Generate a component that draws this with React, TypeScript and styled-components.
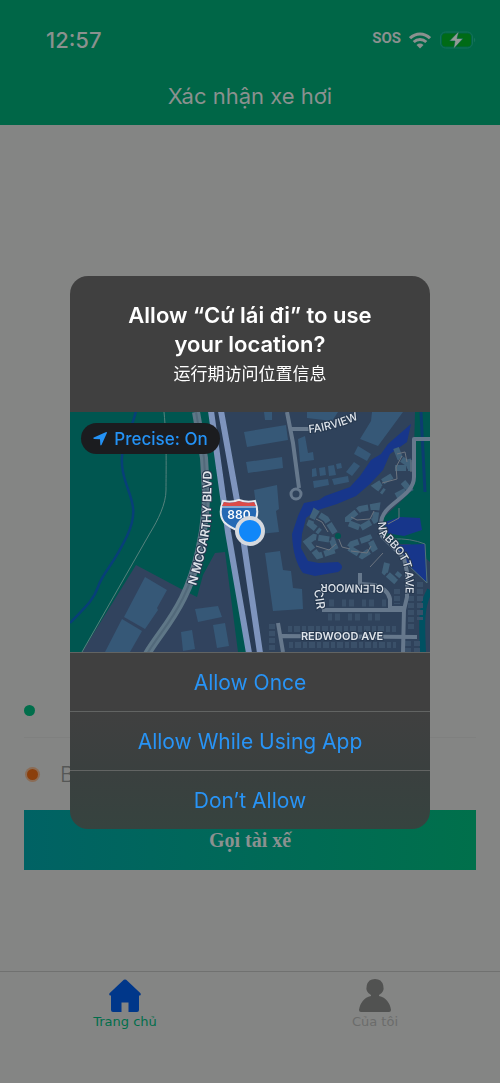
import React from "react";
import styled, { createGlobalStyle } from "styled-components";

const sans = `Inter, "Noto Sans", "Liberation Sans", sans-serif`;

const GlobalStyle = createGlobalStyle`
  * { box-sizing: border-box; }
  body { margin: 0; background: #848584; font-family: ${sans}; }
  button, input { font: inherit; border: 0; margin: 0; padding: 0; background: none; }
  button { cursor: pointer; }
`;

const Page = styled.div`
  min-height: 100vh;
  display: flex;
  flex-direction: column;
  background: #848584;
`;

const TopBar = styled.header`
  background: #006647;
  color: #8b918f;
`;

const StatusBar = styled.div`
  display: flex;
  align-items: center;
  justify-content: space-between;
  height: 72px;
  padding: 8px 24px 0 46px;
`;

const Time = styled.time`
  font-size: 22px;
  font-weight: 500;
`;

const Signals = styled.div`
  display: flex;
  align-items: center;
  gap: 8px;
`;

const Sos = styled.span`
  font-family: Roboto, sans-serif;
  font-size: 15px;
  font-weight: 700;
  line-height: 18px;
  padding-bottom: 4px;
`;

const PageTitle = styled.h1`
  margin: 0;
  height: 53px;
  font-size: 22px;
  font-weight: 400;
  line-height: 48px;
  text-align: center;
`;

const Main = styled.main`
  flex: 1;
  display: flex;
  flex-direction: column;
  justify-content: flex-end;
  padding: 0 24px 101px;
`;

const Stop = styled.label<{ $divided?: boolean }>`
  display: flex;
  align-items: center;
  gap: 20px;
  height: ${(p) => (p.$divided ? 54 : 72)}px;
  border-bottom: ${(p) => (p.$divided ? "1px solid #7f807f" : "0")};
`;

const Dot = styled.span<{ $color: string; $halo?: string }>`
  flex: none;
  width: 11px;
  height: 11px;
  border-radius: 50%;
  background: ${(p) => p.$color};
  ${(p) => p.$halo && `margin: 0 2px 0 3px; box-shadow: 0 0 0 2px ${p.$halo};`}
`;

const StopInput = styled.input`
  flex: 1;
  min-width: 0;
  color: #555756;
  font-size: 22px;
  font-weight: 300;
`;

const CallButton = styled.button`
  height: 60px;
  background: linear-gradient(90deg, #006264, #00704b);
  color: #8b9190;
  font-family: "Liberation Serif", serif;
  font-size: 20px;
  font-weight: 700;
`;

const TabBar = styled.nav`
  display: flex;
  height: 112px;
  border-top: 1px solid #707170;
`;

const Tab = styled.a<{ $color: string }>`
  flex: 1;
  display: flex;
  flex-direction: column;
  align-items: center;
  gap: 1px;
  padding-top: 7px;
  color: ${(p) => p.$color};
  font-family: "DejaVu Sans", sans-serif;
  font-size: 13px;
  line-height: 16px;
  text-decoration: none;
`;

const Overlay = styled.div`
  position: fixed;
  inset: 0;
  display: flex;
  align-items: center;
  justify-content: center;
  padding: 22px 20px 0;
`;

const Dialog = styled.section`
  width: 100%;
  max-width: 360px;
  overflow: hidden;
  border-radius: 18px;
  background: linear-gradient(#404040 78%, #3a403f 90%, #36433f);
`;

const DialogHead = styled.div`
  padding: 25px 40px;
  color: #fff;
  text-align: center;
`;

const DialogTitle = styled.h2`
  margin: 0;
  font-size: 22px;
  font-weight: 600;
  line-height: 29px;
`;

const DialogNote = styled.p`
  margin: 0;
  font-family: "Noto Sans CJK SC", sans-serif;
  font-size: 17px;
  line-height: 28px;
`;

const MapBox = styled.div`
  position: relative;
  height: 240px;
  background: #2f425b;
`;

const MapSvg = styled.svg`
  display: block;
  width: 100%;
  height: 100%;
`;

const Precise = styled.button`
  position: absolute;
  top: 11px;
  left: 11px;
  display: flex;
  align-items: center;
  justify-content: center;
  gap: 7px;
  width: 139px;
  height: 31px;
  border-radius: 16px;
  background: #1b1c1f;
  color: #2492f5;
  font-size: 17px;
  font-weight: 500;
`;

const Choice = styled.button`
  display: block;
  width: 100%;
  height: 59px;
  border-top: 1px solid #626463;
  color: #2894f6;
  font-size: 21px;
  font-weight: 400;
`;

function StreetMap() {
  return (
    <MapSvg viewBox="0 0 360 240" preserveAspectRatio="xMidYMid slice" role="img" aria-label="Map">
      <defs>
        <path id="mccarthy" d="M126 174Q137 138 141 108L142 40" />
        <path id="abbott" d="M308 110L309 122Q328 140 333 152Q338 166 334 196" />
        <path id="fairview" d="M239 21Q262 19 292 6" />
        <path id="cir" d="M244 178L249 212" />
      </defs>
      <rect width="360" height="240" fill="#2f425b" />
      <path d="M0 0H140L178 240H0Z" fill="#005650" />
      <path d="M66 153L113 178L127 185L133 163L145 141L155 140L168 240H12Z" fill="#31435e" />
      <path d="M66 -1C60 25 48 35 53 60S71 94 57 124S33 160 28 175S12 198 0 211" fill="none" stroke="#073f78" strokeWidth="2.5" />
      <path d="M94 0C97 30 96 60 96 78C96 92 88 108 80 121L12 240" fill="none" stroke="#55827d" strokeWidth="1" />

      {/* large buildings */}
      <g fill="#365877">
        <path d="M75 165L97 178L87 196L88 198L75 217L54 205Z" />
        <path d="M52 207L72 219L60 240H35Z" />
        <path d="M125 197L148 194L152 205L128 210Z" />
        <path d="M143 213L155 211L159 234L147 236Z" />
        <path d="M111 220L122 218L125 237L113 239Z" />
        <path d="M174 20L216 13L218 28L177 35Z" />
        <path d="M176 50L212 45L213 56L178 61Z" />
        <path d="M194 0H202V8H195Z" />
        <path d="M184 78L207 73L209 97L206 99L209 120L190 122Z" />
        <path d="M228 27L235 24L238 41L243 40L244 48L230 50Z" />
        <path d="M237 0H268L262 9L237 6Z" />
        <path d="M302 0H333L308 34L290 27L301 9Z" />
        <path d="M288 34L301 42L297 49L284 42Z" />
        <path d="M284 50L290 54L282 64L276 60Z" />
        <path d="M242 57L246 56L247 64L242 65ZM249 56L255 55L256 63L250 64ZM258 54L264 53L266 63L259 64ZM266 52L271 51L272 56L267 57Z" />
        <path d="M243 69L258 67L259 73L244 76ZM262 67L278 64L279 70L264 73Z" />
        <path d="M195 141L210 139L213 158L221 159L223 176L232 177L233 197L203 199Z" />
      </g>

      {/* parkland and water on the right */}
      <path d="M345 0H360V150L340 132L322 132L312 121L314 105L328 92L343 77Z" fill="#005650" />
      <path d="M351 0L355 80" stroke="#0c3c71" strokeWidth="3" fill="none" />
      <path d="M315 110L330 105L350 106L352 118L334 124L316 121Z" fill="#17368b" />
      <path d="M326 133L355 132L357 171L341 156L332 147Z" fill="#17368b" />
      <path d="M323 127Q340 126 355 132L357 171L337 152" fill="none" stroke="#52727a" strokeWidth="1" />
      <path d="M341 12L337 30L320 42L313 58L300 72L286 84L267 92L245 99L236 106L232 122L231 136L238 149L249 151L268 150Q276 155 268 160L245 164L233 161Q223 148 222 122L228 104L234 91L249 88L255 84L280 75L290 64L301 48L311 42L318 32Z" fill="#17368b" />
      <path d="M360 178C350 195 352 215 353 240" fill="none" stroke="#005162" strokeWidth="6" />

      {/* apartment rings */}
      <g fill="none" stroke="#40617a" strokeWidth="6" strokeDasharray="11 2">
        <path d="M265 121L256 107L245 100L240 112L250 120" />
        <path d="M278 107L290 97L307 94L305 108L291 116L278 111Z" />
        <path d="M237 130L244 125L262 128L266 138L248 144Z" />
        <path d="M279 136L292 144L304 136L299 126L282 132Z" />
        <path d="M326 36L330 46L340 53M322 64L306 74L314 80M333 70L339 77L326 84" />
        <path d="M317 151L315 160L324 168L330 161" />
        <path d="M325 56H340L338 47" />
      </g>
      <g fill="none" stroke="#6c747f" strokeWidth="1">
        <path d="M246 107L252 110L258 120M281 105L287 108L300 107L304 99M246 134L259 138L266 132M281 139L297 141L301 134M268 125L272 135L280 137" />
        <path d="M327 42L335 40L337 50M312 71L327 67L326 55L332 44M341 48V60" />
        <path d="M300 155L313 141M329 96V106L318 112" />
      </g>
      <circle cx="268" cy="124" r="3" fill="#005650" />

      {/* rows of houses */}
      <g stroke="#3a5069" fill="none">
        <path d="M252 191H321M258 205H318" strokeWidth="7" strokeDasharray="4 3 5 8" />
        <path d="M218 217H326M219 233H326" strokeWidth="6" strokeDasharray="4 2 6 2" />
        <path d="M202 212V240M341 184V217M350 170V208M327 177V192M338 229V240M347 229V240" strokeWidth="6" strokeDasharray="5 2" />
      </g>

      {/* streets */}
      <g fill="none" stroke="#66788c" strokeWidth="4" strokeLinejoin="round">
        <path d="M217 0L223 31L229 76M222 17H239" />
        <circle cx="226" cy="82" r="5" fill="#2f425b" strokeWidth="3" />
        <path d="M360 27H344V65C344 86 311 91 311 112L312 124L334 146L337 160V185L334 198L333 240" />
        <path d="M252 198H334M290 161V172L304 173Q318 177 320 187V196H334" />
        <path d="M212 224L347 225M208 211L213 240" />
      </g>
      <path d="M126 0L134 46L136 80C136 120 126 160 113 186S89 222 77 242" fill="none" stroke="#5f7787" strokeWidth="8" />
      <path d="M126 0L134 46L136 80C136 120 126 160 113 186S89 222 77 242" fill="none" stroke="#52697a" strokeWidth="2" />

      {/* freeway */}
      <path d="M147 0L166 120L184 240" fill="none" stroke="#293b54" strokeWidth="8" />
      <path d="M141 -1L158 120L179 241M151 -1L170 105L190 241" fill="none" stroke="#7e94bd" strokeWidth="6" />

      <g
        fill="#dfe4ea"
        stroke="#26384f"
        strokeWidth="2"
        paintOrder="stroke"
        fontFamily="Inter, sans-serif"
        fontSize="11"
        fontWeight="500"
      >
        <text fontSize="12" fontWeight="600"><textPath href="#mccarthy">N MCCARTHY BLVD</textPath></text>
        <text><textPath href="#abbott">N ABBOTT AVE</textPath></text>
        <text><textPath href="#fairview">FAIRVIEW</textPath></text>
        <text fontSize="12"><textPath href="#cir">CIR</textPath></text>
        <text x="272" y="228" textAnchor="middle" fontWeight="600">REDWOOD AVE</text>
        <text transform="translate(314 173) rotate(181)">GLENMOOR</text>
      </g>

      {/* interstate shield */}
      <path d="M153 89Q161 91 169 88Q177 91 185 89Q190 102 184 110Q179 115 169 119Q159 115 154 110Q148 102 153 89Z" fill="#2569b4" stroke="#e6e9ee" strokeWidth="2" />
      <path d="M154 90Q161 92 169 89Q177 92 184 90L186 94H152Z" fill="#dc4b48" />
      <path d="M152 95H186" stroke="#e6e9ee" strokeWidth="1" />
      <text x="169" y="107" fill="#fff" textAnchor="middle" fontFamily="Inter, sans-serif" fontSize="12" fontWeight="600">880</text>

      <circle cx="180" cy="119" r="15" fill="#d5d9df" />
      <circle cx="180" cy="119" r="11" fill="#1187f8" />
    </MapSvg>
  );
}

export default function App() {
  return (
    <>
      <GlobalStyle />
      <Page>
        <TopBar>
          <StatusBar>
            <Time>12:57</Time>
            <Signals>
              <Sos>SOS</Sos>
              <svg width="22" height="17" viewBox="0 0 22 17" fill="none" stroke="#8b918f" strokeWidth="3" aria-hidden="true">
                <path d="M1 6.2C6.8.5 15.2.5 21 6.2M4.7 10C8.3 6.6 13.7 6.6 17.3 10" />
                <path d="M11 16.5L7.5 13Q11 10.2 14.5 13Z" fill="#8b918f" stroke="none" />
              </svg>
              <svg width="37" height="18" viewBox="0 0 37 18" aria-hidden="true">
                <rect x="1.5" y="1" width="32" height="16" rx="5" fill="none" stroke="#14705a" />
                <rect x="3" y="2.500" width="29" height="13" rx="3.500" fill="#006b16" />
                <path d="M35 6.500Q37.500 9 35 11.500Z" fill="#14705a" />
                <path d="M20 0L10.500 10H16L14.500 18L24 7.500H18Z" fill="#949a97" stroke="#006647" strokeWidth=".6" />
              </svg>
            </Signals>
          </StatusBar>
          <PageTitle>Xác nhận xe hơi</PageTitle>
        </TopBar>

        <Main>
          <Stop $divided>
            <Dot $color="#006e4b" />
            <StopInput aria-label="Điểm đón" />
          </Stop>
          <Stop>
            <Dot $color="#8b3f0b" $halo="#8b6c55" />
            <StopInput aria-label="Điểm đến" defaultValue="B" />
          </Stop>
          <CallButton>Gọi tài xế</CallButton>
        </Main>

        <TabBar>
          <Tab href="#home" $color="#006e4b">
            <svg width="34" height="34" viewBox="0 0 34 34" fill="#00378a" aria-hidden="true">
              <path d="M15.800.8Q17 0 18.200.8L32.500 14.200Q33.500 16.500 31 16.500V31Q31 33 29 33H20.500V23.500H13.500V33H5Q3 33 3 31V16.500Q.5 16.500 1.500 14.200Z" />
            </svg>
            Trang chủ
          </Tab>
          <Tab href="#me" $color="#6b6c6b">
            <svg width="34" height="34" viewBox="0 0 34 34" fill="#515251" aria-hidden="true">
              <path d="M17 0A8.500 8.500 0 0 1 21 16V17C28 18.500 32 24 33 31Q33 33 31 33H3Q1 33 1 31C2 24 6 18.500 13 17V16A8.500 8.500 0 0 1 17 0Z" />
            </svg>
            Của tôi
          </Tab>
        </TabBar>
      </Page>

      <Overlay>
        <Dialog role="alertdialog" aria-modal="true" aria-labelledby="ask-title">
          <DialogHead>
            <DialogTitle id="ask-title">Allow “Cứ lái đi” to use your location?</DialogTitle>
            <DialogNote lang="zh">运行期访问位置信息</DialogNote>
          </DialogHead>
          <MapBox>
            <StreetMap />
            <Precise>
              <svg width="14" height="14" viewBox="0 0 14 14" fill="currentColor" aria-hidden="true">
                <path d="M13.200.1Q14.200 0 13.900 1L8.500 13Q7.700 14 7.300 12.800L7 7.200L1 6.900Q-.3 6.300.8 5.500Z" />
              </svg>
              Precise: On
            </Precise>
          </MapBox>
          <Choice>Allow Once</Choice>
          <Choice>Allow While Using App</Choice>
          <Choice>Don’t Allow</Choice>
        </Dialog>
      </Overlay>
    </>
  );
}
